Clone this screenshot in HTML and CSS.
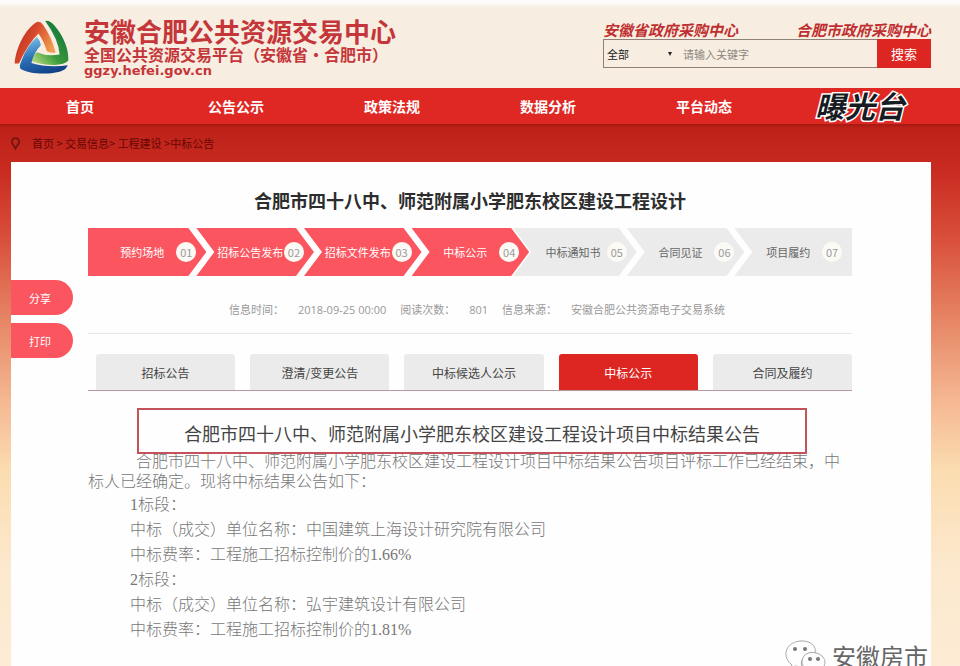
FILE: index.html
```html
<!DOCTYPE html>
<html lang="zh-CN">
<head>
<meta charset="utf-8">
<title>安徽合肥公共资源交易中心</title>
<link rel="stylesheet" href="styles.css">
</head>
<body>
<header class="header">
  <a class="brand" href="#">
    <svg class="brand-mark" viewBox="44 60 164 164" aria-hidden="true">
      <defs>
        <linearGradient id="red" x1="0" y1="0" x2="1" y2="0.5"><stop offset="0.1" stop-color="#bf2c20"/><stop offset="0.5" stop-color="#d8492b"/><stop offset="1" stop-color="#f0a052"/></linearGradient>
        <linearGradient id="green" x1="1" y1="0" x2="0" y2="1"><stop offset="0.2" stop-color="#15793a"/><stop offset="0.6" stop-color="#3d9c3c"/><stop offset="1" stop-color="#c8e38a"/></linearGradient>
        <linearGradient id="blue" x1="0.2" y1="0" x2="0.6" y2="1"><stop offset="0" stop-color="#7fc3ea"/><stop offset="0.5" stop-color="#2b71b8"/><stop offset="1" stop-color="#123f86"/></linearGradient>
      </defs>
      <path fill="url(#red)" d="M46 190C49 145 76 88 112 66Q122 62 131 75Q157 112 168 157Q155 160 142 153Q133 122 117 100Q84 132 59 190Z"/>
      <path fill="url(#green)" d="M137 63Q150 60 165 77C192 108 208 148 206 181Q194 194 165 194C140 194 115 190 96 183Q100 165 112 156Q145 170 180 163Q177 118 137 63Z"/>
      <path fill="url(#blue)" d="M112 111Q123 122 124 135Q102 158 96 188Q145 203 204 195Q200 209 180 214C140 224 90 221 64 206Q58 200 66 182Q82 138 112 111Z"/>
    </svg>
    <span class="brand-text">
      <span class="brand-name">安徽合肥公共资源交易中心</span>
      <span class="brand-sub">全国公共资源交易平台（安徽省·合肥市）</span>
      <span class="brand-domain">ggzy.hefei.gov.cn</span>
    </span>
  </a>
  <div class="tools">
    <div class="centers">
      <a href="#">安徽省政府采购中心</a>
      <a href="#">合肥市政府采购中心</a>
    </div>
    <form class="search">
      <span class="scope">
        <select aria-label="搜索范围"><option>全部</option></select>
      </span>
      <input type="text" placeholder="请输入关键字" aria-label="关键字">
      <button type="button">搜索</button>
    </form>
  </div>
</header>

<nav class="nav">
  <a href="#">首页</a>
  <a href="#">公告公示</a>
  <a href="#">政策法规</a>
  <a href="#">数据分析</a>
  <a href="#">平台动态</a>
  <a class="expose" href="#">曝光台</a>
</nav>

<div class="page">
  <div class="crumbs">
    <svg class="pin" viewBox="0 0 10 14" aria-hidden="true"><path d="M5 12.500C4 10 1 8 1 5a4 4 0 0 1 8 0C9 8 6 10 5 12.500Z"/></svg>
    <span><a href="#">首页</a> &gt; <a href="#">交易信息</a>&gt; <a href="#">工程建设</a> &gt;<a href="#">中标公告</a></span>
  </div>

  <div class="panel">
    <aside class="side">
      <button type="button">分享</button>
      <button type="button">打印</button>
    </aside>
    <main class="main">
      <h1>合肥市四十八中、师范附属小学肥东校区建设工程设计</h1>
      <ol class="steps">
        <li class="done"><span>预约场地</span><b>01</b></li>
        <li class="done"><span>招标公告发布</span><b>02</b></li>
        <li class="done"><span>招标文件发布</span><b>03</b></li>
        <li class="done"><span>中标公示</span><b>04</b></li>
        <li class="next"><span>中标通知书</span><b>05</b></li>
        <li><span>合同见证</span><b>06</b></li>
        <li><span>项目履约</span><b>07</b></li>
      </ol>
      <div class="meta">
        <span>信息时间：</span><span class="value">2018-09-25 00:00</span>
        <span>阅读次数：</span><span class="value">801</span>
        <span>信息来源：</span><span class="value">安徽合肥公共资源电子交易系统</span>
      </div>
      <div class="tabs">
        <button type="button">招标公告</button>
        <button type="button">澄清/变更公告</button>
        <button type="button">中标候选人公示</button>
        <button type="button" class="active">中标公示</button>
        <button type="button">合同及履约</button>
      </div>
      <h2>合肥市四十八中、师范附属小学肥东校区建设工程设计项目中标结果公告</h2>
      <article class="notice">
        <p class="lead">合肥市四十八中、师范附属小学肥东校区建设工程设计项目中标结果公告项目评标工作已经结束，中标人已经确定。现将中标结果公告如下：</p>
        <p>1标段：</p>
        <p>中标（成交）单位名称：中国建筑上海设计研究院有限公司</p>
        <p>中标费率：工程施工招标控制价的1.66%</p>
        <p>2标段：</p>
        <p>中标（成交）单位名称：弘宇建筑设计有限公司</p>
        <p>中标费率：工程施工招标控制价的1.81%</p>
      </article>
    </main>
    <div class="account">
      <svg viewBox="0 0 44 36" aria-hidden="true">
        <path d="M8 27C-2 20 0 5 16 3C27 2 33 9 31 15C22 15 15 21 18 29L11 28L6 31Z"/>
        <path d="M18 24C18 16 26 13 32 15C42 17 44 28 36 32L37 35L32 33C24 34 18 30 18 24Z"/>
        <g class="eyes"><circle cx="11" cy="11" r="2"/><circle cx="21" cy="11" r="2"/><circle cx="26" cy="21" r="2"/><circle cx="34" cy="21" r="2"/></g>
      </svg>
      <span>安徽房市</span>
    </div>
  </div>
</div>
</body>
</html>
```
FILE: styles.css
```css
* { box-sizing: border-box; }
body {
  margin: 0;
  min-height: 100vh;
  display: flex;
  flex-direction: column;
  font-family: "Noto Sans CJK SC", sans-serif;
  font-size: 11px;
  color: #444;
}
a { color: inherit; text-decoration: none; }
button, input, select { font: inherit; border: 0; border-radius: 0; padding: 0; }

.header {
  display: flex;
  justify-content: space-between;
  height: 88px;
  padding: 0 29px 0 14px;
  background: linear-gradient(#fdfbfb 2px, #f7eee1 8px);
}
.brand { display: flex; gap: 15px; padding-top: 16px; color: #c5363a; font-weight: 700; }
.brand-mark { width: 55px; height: 55px; margin-top: 4px; }
.brand-text { display: flex; flex-direction: column; white-space: nowrap; }
.brand-name { font-size: 26px; line-height: 29px; }
.brand-sub { font-size: 16px; line-height: 19px; }
.brand-domain { font-family: "DejaVu Sans", sans-serif; font-size: 13px; line-height: 13px; }

.tools { width: 328px; padding-top: 20px; }
.centers {
  display: flex;
  justify-content: space-between;
  font-size: 15px;
  line-height: 19px;
  font-weight: 700;
  font-style: italic;
  color: #bf2f30;
}
.search { display: flex; height: 29px; }
.scope { position: relative; width: 76px; border: 1px solid #8f8177; border-right: 0; }
.scope select { width: 100%; height: 100%; padding-left: 3px; appearance: none; background: none; color: #222; }
.scope::after {
  content: "";
  position: absolute;
  right: 7px;
  top: 12px;
  border: 2px solid transparent;
  border-top: 4px solid #222;
  pointer-events: none;
}
.search input { flex: 1; min-width: 0; padding-left: 4px; border: 1px solid #8f8177; border-width: 1px 0; background: none; }
.search input::placeholder { color: #8c8680; }
.search button { width: 54px; background: #dd2622; color: #fff; font-size: 13px; }

.nav {
  display: grid;
  grid-template-columns: repeat(6, 1fr);
  height: 36px;
  padding: 0 22px 0 2px;
  background: #df2824;
  color: #fff;
  font-size: 14px;
  font-weight: 700;
  line-height: 36px;
  text-align: center;
}
.expose {
  color: #171b22;
  font-size: 30px;
  line-height: 34px;
  font-style: italic;
  -webkit-text-stroke: 3px #fff;
  paint-order: stroke fill;
}

.page {
  flex: 1;
  display: flex;
  flex-direction: column;
  padding: 0 29px 0 11px;
  background: linear-gradient(#a51a10, #bd2118 4px, #c92b20 46px, #d9503c 116px, #e88c6a 206px, #f5b792 276px, #fbdcb0 346px, #fce9ce 446px, #fdebd5);
}
.crumbs { display: flex; align-items: center; gap: 12px; height: 38px; color: #650705; }
.pin { width: 9px; height: 13px; fill: none; stroke: #6e1510; stroke-width: 2; }

.panel {
  position: relative;
  flex: 1;
  display: grid;
  grid-template-columns: 77px 1fr;
  padding-right: 79px;
  overflow: hidden;
  background: #fefefe;
}
.side { display: flex; flex-direction: column; gap: 8px; padding-top: 118px; }
.side button { width: 62px; height: 35px; padding-right: 4px; border-radius: 0 18px 18px 0; background: #fb5660; color: #fff; }

h1 { margin: 24px 0 14px; font-size: 18px; line-height: 28px; font-weight: 700; text-align: center; color: #2d2d2d; }

.steps {
  display: grid;
  grid-template-columns: 11fr repeat(6, 10fr);
  height: 48px;
  margin: 0;
  padding: 0;
  list-style: none;
}
.steps li {
  display: flex;
  align-items: center;
  margin-left: -10px;
  padding: 0 10px 0 20px;
  background: #ebebeb;
  color: #666;
  white-space: nowrap;
  clip-path: polygon(0 0, calc(100% - 18px) 0, 100% 50%, calc(100% - 18px) 100%, 0 100%, 18px 50%);
}
.steps li:first-child { margin-left: 0; clip-path: polygon(0 0, calc(100% - 18px) 0, 100% 50%, calc(100% - 18px) 100%, 0 100%); }
.steps li:last-child { clip-path: polygon(0 0, 100% 0, 100% 100%, 0 100%, 18px 50%); }
.steps .done { background: #fb5660; color: #fff; }
.steps .next { margin-left: -16px; padding-left: 26px; }
.steps span { flex: 1; text-align: center; }
.steps b { width: 20px; border-radius: 50%; background: #fcfaf5; color: #999; font-weight: 400; line-height: 20px; text-align: center; }

.meta {
  display: flex;
  justify-content: center;
  height: 58px;
  padding: 10px 0 0 14px;
  border-bottom: 1px solid #e6e6e6;
  color: #999;
  font-family: "Open Sans", "Noto Sans CJK SC", sans-serif;
  line-height: 48px;
}
.meta .value { margin: 0 14px; }
.meta .value:last-child { margin-right: 0; }

.tabs { display: flex; gap: 15px; margin-top: 20px; padding-left: 8px; border-bottom: 1px solid #b9999c; }
.tabs button { flex: 1; height: 36px; border-radius: 3px 3px 0 0; background: #ebebeb; color: #444; font-size: 12px; }
.tabs .active { background: #dd2622; color: #fff; }

h2 {
  position: relative;
  margin: 17px 45px 0 49px;
  padding: 5px 0 0;
  border: 2px solid #c4525b;
  background: #fefefe;
  color: #444;
  font-size: 18px;
  line-height: 37px;
  font-weight: 400;
  text-align: center;
}
.notice {
  margin-top: -2px;
  color: #777;
  font-family: "Liberation Serif", "Noto Sans CJK SC", serif;
  font-size: 16px;
  line-height: 25px;
  font-weight: 300;
}
.notice p { margin: 0; text-indent: 42px; }
.notice .lead { line-height: 20px; text-indent: 48px; }

.account { position: absolute; right: 3px; bottom: -8px; display: flex; align-items: center; gap: 4px; color: #666; font-size: 24px; line-height: 36px; }
.account svg { width: 44px; height: 36px; fill: #fefefe; stroke: #aaa; stroke-width: 1; }
.account .eyes { fill: #777; stroke: none; }
```
